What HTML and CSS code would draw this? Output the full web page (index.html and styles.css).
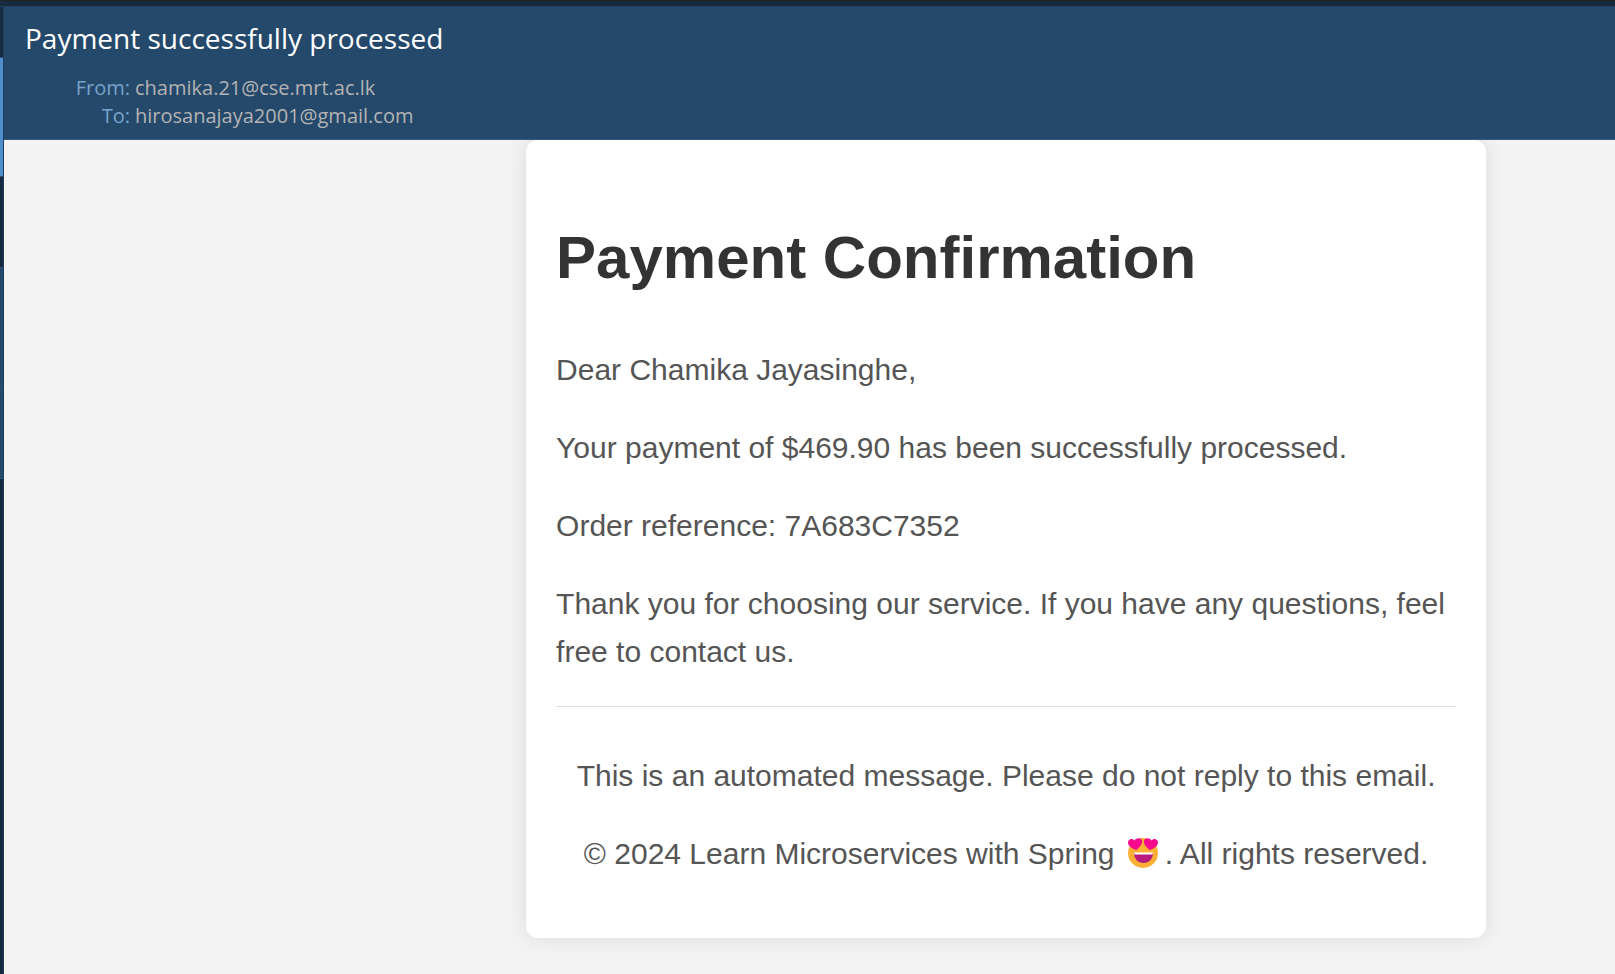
FILE: index.html
```html
<!DOCTYPE html>
<html lang="en">
<head>
<meta charset="utf-8">
<title>Payment successfully processed</title>
<link rel="stylesheet" href="styles.css">
</head>
<body>
<div class="app">
  <div class="topbar"></div>
  <div class="columns">
    <div class="rail">
      <div class="rail-search"></div>
      <div class="rail-item rail-selected"></div>
      <div class="rail-item rail-gap"></div>
      <div class="rail-item rail-first"></div>
      <div class="rail-item rail-second"></div>
      <div class="rail-item rail-rest"></div>
    </div>
    <main class="message">
      <header class="message-header">
        <h2 class="subject">Payment successfully processed</h2>
        <dl class="fields">
          <dt>From:</dt><dd>chamika.21@cse.mrt.ac.lk</dd>
          <dt>To:</dt><dd>hirosanajaya2001@gmail.com</dd>
        </dl>
      </header>
      <div class="message-body">
        <article class="card">
          <h1>Payment Confirmation</h1>
          <p>Dear Chamika Jayasinghe,</p>
          <p>Your payment of $469.90 has been successfully processed.</p>
          <p>Order reference: 7A683C7352</p>
          <p>Thank you for choosing our service. If you have any questions, feel free to contact us.</p>
          <footer class="card-footer">
            <p>This is an automated message. Please do not reply to this email.</p>
            <p>© 2024 Learn Microservices with Spring <svg class="emoji" viewBox="0 0 42 30" role="img" aria-label="Smiling face with heart eyes"><circle cx="20" cy="15" r="15" fill="#fbb034"/><path d="M11 15h19c0 6-4 10-9.500 10S11 21 11 15z" fill="#b91a7d"/><path d="M11 14.500h19l-.5 2h-18z" fill="#fff"/><path d="M13.500 12C9 10.500 5 8 5 4.500 5 1 9.500-.5 11.500 2.500 13-.5 18-.8 19 2.500c.8 3.500-2.500 7-5.500 9.500z" fill="#f70a8d"/><path d="M26.500 12c4.500-1.500 8.500-4 8.500-7.500 0-3.500-4.500-5-6.500-2C27-.5 22-.8 21 2.500c-.8 3.500 2.500 7 5.500 9.500z" fill="#f70a8d"/></svg>. All rights reserved.</p>
          </footer>
        </article>
      </div>
    </main>
  </div>
</div>
</body>
</html>
```
FILE: styles.css
```css
* { box-sizing: border-box; }

body { margin: 0; background: #f3f3f3; }

.app { display: flex; flex-direction: column; min-height: 100vh; }

.topbar { height: 7px; background: #172b40; border-top: 1px solid #222; border-bottom: 1px solid #243f5c; }

.columns { display: flex; flex: 1; }

.rail { display: flex; flex-direction: column; width: 4px; background: #172b40; border-right: 1px solid #1f3d5b; }
.rail-search { height: 50px; }
.rail-item { border-top: 1px solid #2c5378; }
.rail-selected { height: 119px; background: #4f8fcc; }
.rail-gap { height: 91px; }
.rail-first { height: 119px; background: #25496b; }
.rail-second { height: 92px; background: #25496b; }
.rail-rest { flex: 1; }

.message { display: flex; flex: 1; flex-direction: column; min-width: 0; }

.message-header {
  padding: 11px 21px 9px;
  background: #25496b;
  border-bottom: 1px solid #2f5d88;
  font-family: "Open Sans", "Noto Sans", sans-serif;
}
.subject { margin: 0 0 16px; color: #fff; font-size: 28px; font-weight: 400; line-height: 40px; }
.fields { display: grid; grid-template-columns: 105px 1fr; column-gap: 5px; margin: 0; font-size: 20px; line-height: 28px; }
.fields dt { color: #78a3cc; text-align: right; }
.fields dd { margin: 0; color: #b3b3b3; }

.message-body {
  display: grid;
  grid-template-columns: 4.05fr minmax(0, 960px) 1fr;
  flex: 1;
  align-items: start;
  overflow: hidden;
  background: #f3f3f3;
}

.card {
  grid-column: 2;
  padding: 30px;
  background: #fff;
  border-radius: 12px;
  box-shadow: 0 0 20px rgba(0, 0, 0, 0.1);
  color: #555;
  font-family: Arial, "Liberation Sans", sans-serif;
  font-size: 30px;
  line-height: 48px;
}
.card h1 { margin: 40px 0; color: #333; font-size: 60px; line-height: 96px; }
.card p { margin: 0 0 30px; }

.card-footer { padding-top: 45px; border-top: 1px solid #ddd; text-align: center; }

.emoji { width: 42px; height: 30px; vertical-align: -4px; }
```
